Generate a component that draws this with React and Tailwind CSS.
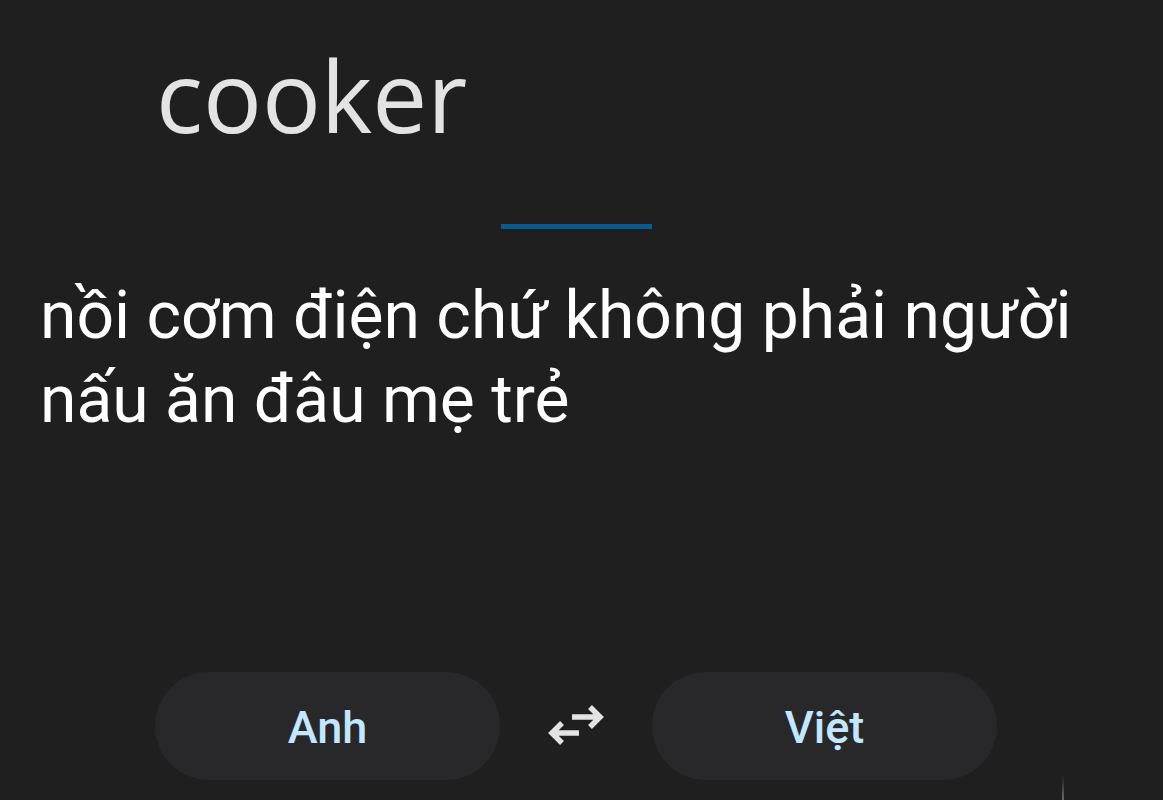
export default function App() {
  return (
    <div className="w-[1163px] h-[800px] bg-[#1f1f1f] overflow-hidden relative flex flex-col">
      <div className="pl-[156px] pt-[40px] h-[160px]">
        <div className="text-[#e3e3e3] text-[98px] leading-[110px]" style={{ fontFamily: '"Open Sans", sans-serif' }}>cooker</div>
      </div>
      <div className="flex pl-[501px] pt-[64px]">
        <div className="w-[151px] h-[5px] bg-[#0b5a8c]"></div>
      </div>
      <div className="pl-[40px] pt-[45px] pr-[20px]">
        <div className="text-white text-[66px] leading-[84px]" style={{ fontFamily: 'Roboto, sans-serif' }}>
          nồi cơm điện chứ không phải người nấu ăn đâu mẹ trẻ
        </div>
      </div>
      <div className="flex-1"></div>
      <div className="flex items-center pl-[155px] pb-[20px]">
        <div className="w-[345px] h-[108px] rounded-full bg-[#28282a] flex items-center justify-center pt-[4px]">
          <span className="text-[#c2e7ff] text-[45px] font-medium" style={{ fontFamily: 'Roboto, sans-serif' }}>Anh</span>
        </div>
        <div className="w-[152px] flex items-center justify-center">
          <svg width="58" height="46" viewBox="0 0 58 46" fill="none" stroke="#e3e3e3" strokeWidth="5.5" strokeLinecap="butt" strokeLinejoin="miter">
            <path d="M25 14 H52 M43 4 L53 14 L43 24" />
            <path d="M32 30 H5 M15 20 L5 30 L15 40" />
          </svg>
        </div>
        <div className="w-[345px] h-[108px] rounded-full bg-[#28282a] flex items-center justify-center pt-[4px]">
          <span className="text-[#c2e7ff] text-[45px] font-medium" style={{ fontFamily: 'Roboto, sans-serif' }}>Việt</span>
        </div>
      </div>
      <div className="absolute left-[1062px] top-[776px] w-[2px] h-[24px] bg-gradient-to-b from-transparent to-[#6a6a6a]"></div>
    </div>
  );
}
